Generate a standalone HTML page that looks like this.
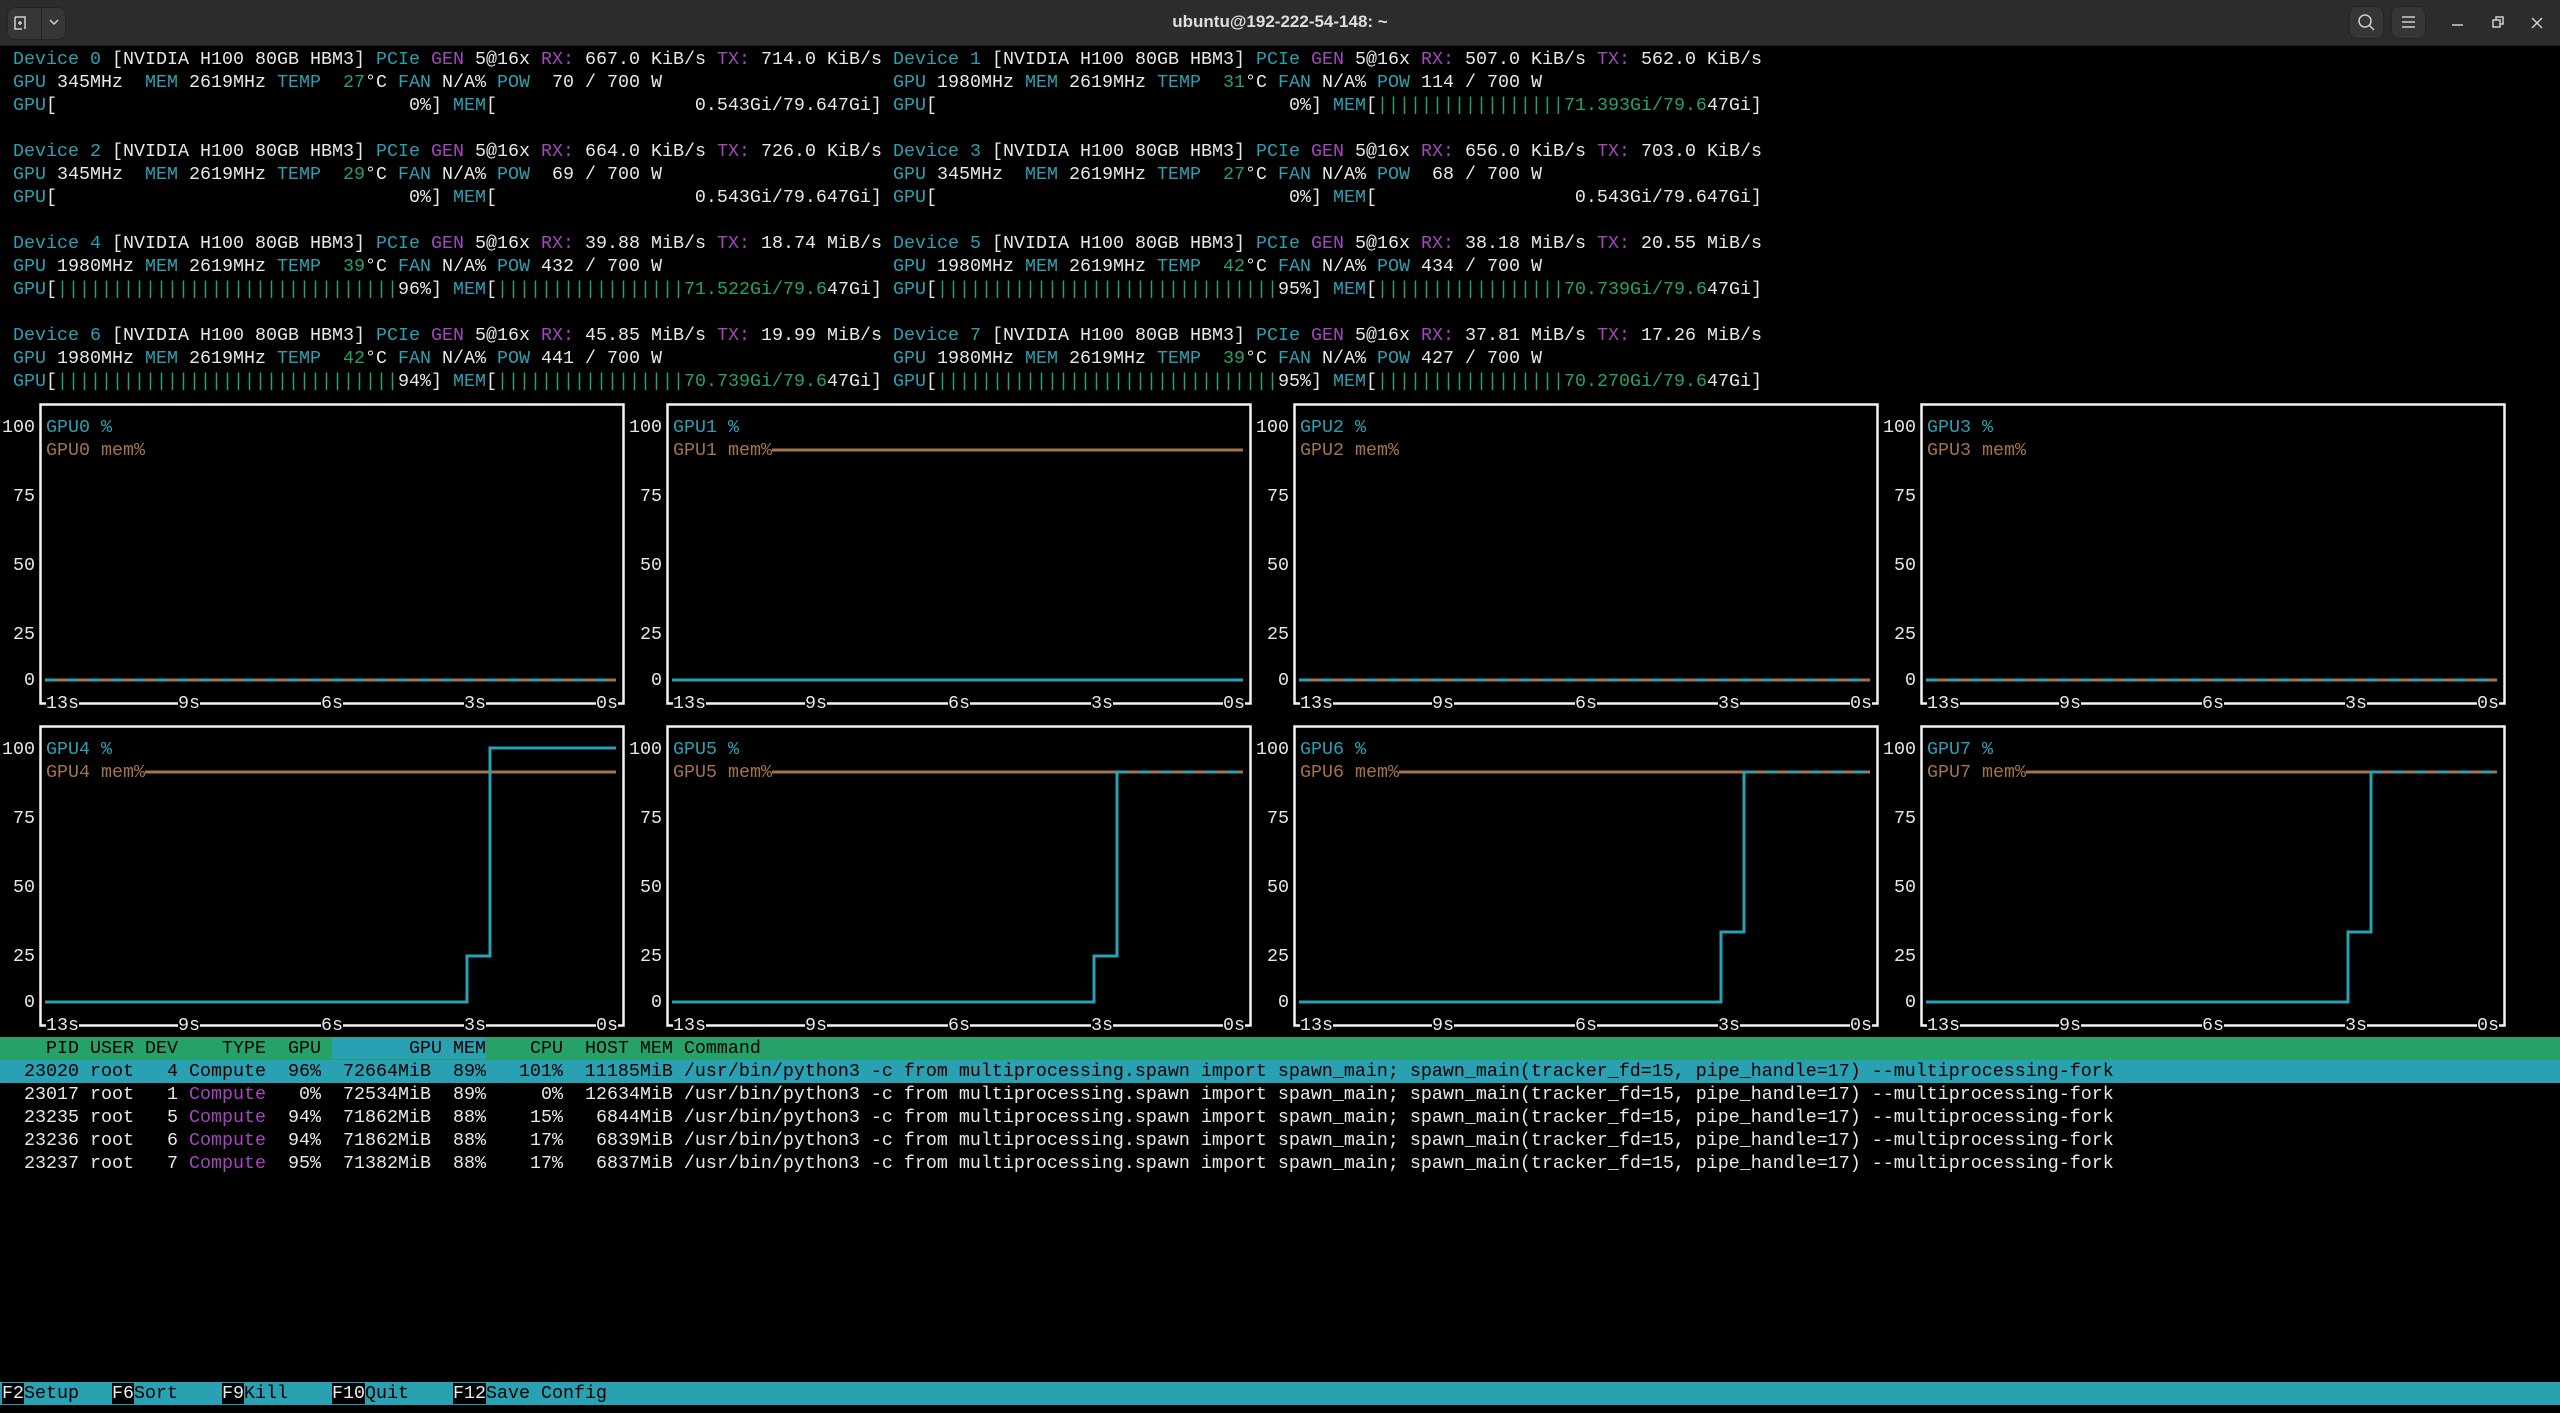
<!DOCTYPE html>
<html><head><meta charset="utf-8">
<style>
*{margin:0;padding:0;box-sizing:border-box}
html,body{width:2560px;height:1413px;background:#000;overflow:hidden}
body{position:relative;font-family:"Liberation Mono","DejaVu Sans Mono",monospace;font-size:18.33px;color:#e8e8e8}
.r{position:absolute;white-space:pre;line-height:23px;height:23px}
.c{color:#2aa1b3}.m{color:#a347ba}.g{color:#26a269}.o{color:#a2734c}
.k{background:#000}
.bg{display:inline-block;overflow:hidden;vertical-align:top;color:#26a269;height:23px}
.b31{width:341px}.b18{width:187px}
#tb{position:absolute;left:0;top:0;width:2560px;height:46px;background:#2c2c2c;border-bottom:1px solid #1e1e1e}
#tt{position:absolute;left:0;width:2560px;top:0;line-height:44px;text-align:center;font-family:"Liberation Sans",sans-serif;font-weight:bold;font-size:17px;color:#dedede}
.btn{position:absolute;background:#363636;border:1px solid #242424;border-radius:8px}
svg{position:absolute;left:0;top:0}
</style></head><body>
<div id="tb">
<div id="tt">ubuntu@192-222-54-148: ~</div>
<div class="btn" style="left:7px;top:7px;width:59px;height:33px"></div>
<div style="position:absolute;left:41px;top:7px;width:1px;height:33px;background:#242424"></div>
<div class="btn" style="left:2349px;top:6px;width:35px;height:33px"></div>
<div class="btn" style="left:2391px;top:6px;width:35px;height:33px"></div>
</div>
<svg width="2560" height="1413" viewBox="0 0 2560 1413">
<g fill="none" stroke="#cfcfcf" stroke-width="1.5">
<path d="M15,17 V29 H22 M15,17 H25 V29 M18,23 H22 M20,21 V25"/>
<path d="M50,20 L54,24 L58,20"/>
<circle cx="2365" cy="21" r="6"/><path d="M2369,25 L2374,30"/>
<path d="M2402,17 H2415 M2402,22 H2415 M2402,27 H2415"/>
<path d="M2452,25 H2463"/>
<path d="M2493,20 H2500 V27 H2493 Z M2496,20 V17 H2503 V24 H2500"/>
<path d="M2532,18 L2542,28 M2542,18 L2532,28"/>
</g>
<g fill="none" stroke="#f2f2f2" stroke-width="2.5">
<rect x="40.5" y="404.5" width="583" height="299"/>
<rect x="667.5" y="404.5" width="583" height="299"/>
<rect x="1294.5" y="404.5" width="583" height="299"/>
<rect x="1921.5" y="404.5" width="583" height="299"/>
<rect x="40.5" y="726.5" width="583" height="299"/>
<rect x="667.5" y="726.5" width="583" height="299"/>
<rect x="1294.5" y="726.5" width="583" height="299"/>
<rect x="1921.5" y="726.5" width="583" height="299"/>
</g>
<g fill="none" stroke-width="3">
<path stroke="#2aa1b3" d="M45,680 H616 M1299,680 H1870 M1926,680 H2497 M672,680 H1243"/>
<path stroke="#a2734c" stroke-dasharray="11 11" d="M56,680 H616 M1310,680 H1870 M1937,680 H2497"/>
<path stroke="#a2734c" d="M772,450 H1243"/>
<path stroke="#a2734c" d="M145,772 H616 M772,772 H1243 M1399,772 H1870 M2026,772 H2497"/>
<path stroke="#2aa1b3" d="M45,1002 H467 V956 H490 V748 H616 M672,1002 H1094 V956 H1117 V772 H1243 M1299,1002 H1721 V932 H1744 V772 H1870 M1926,1002 H2348 V932 H2371 V772 H2497"/>
<path stroke="#a2734c" stroke-dasharray="11 11" d="M1128,772 H1243 M1755,772 H1870 M2382,772 H2497"/>
</g>
</svg>

<div class="r" style="left:2px;top:48px"> <span class="c">Device 0</span> [NVIDIA H100 80GB HBM3] <span class="c">PCIe</span> <span class="m">GEN</span> 5@16x <span class="m">RX:</span> 667.0 KiB/s <span class="m">TX:</span> 714.0 KiB/s</div>
<div class="r" style="left:893px;top:48px"><span class="c">Device 1</span> [NVIDIA H100 80GB HBM3] <span class="c">PCIe</span> <span class="m">GEN</span> 5@16x <span class="m">RX:</span> 507.0 KiB/s <span class="m">TX:</span> 562.0 KiB/s</div>
<div class="r" style="left:2px;top:71px"> <span class="c">GPU</span> 345MHz  <span class="c">MEM</span> 2619MHz <span class="c">TEMP</span>  <span class="g">27</span>°C <span class="c">FAN</span> N/A% <span class="c">POW</span>  70 / 700 W</div>
<div class="r" style="left:893px;top:71px"><span class="c">GPU</span> 1980MHz <span class="c">MEM</span> 2619MHz <span class="c">TEMP</span>  <span class="g">31</span>°C <span class="c">FAN</span> N/A% <span class="c">POW</span> 114 / 700 W</div>
<div class="r" style="left:2px;top:94px"> <span class="c">GPU</span>[                                0%] <span class="c">MEM</span>[                  0.543Gi/79.647Gi]</div>
<div class="r" style="left:893px;top:94px"><span class="c">GPU</span>[                                0%] <span class="c">MEM</span>[<span class="bg b18">||||||||||||||||||||||||</span><span class="g">71.393Gi/79.6</span>47Gi]</div>

<div class="r" style="left:2px;top:140px"> <span class="c">Device 2</span> [NVIDIA H100 80GB HBM3] <span class="c">PCIe</span> <span class="m">GEN</span> 5@16x <span class="m">RX:</span> 664.0 KiB/s <span class="m">TX:</span> 726.0 KiB/s</div>
<div class="r" style="left:893px;top:140px"><span class="c">Device 3</span> [NVIDIA H100 80GB HBM3] <span class="c">PCIe</span> <span class="m">GEN</span> 5@16x <span class="m">RX:</span> 656.0 KiB/s <span class="m">TX:</span> 703.0 KiB/s</div>
<div class="r" style="left:2px;top:163px"> <span class="c">GPU</span> 345MHz  <span class="c">MEM</span> 2619MHz <span class="c">TEMP</span>  <span class="g">29</span>°C <span class="c">FAN</span> N/A% <span class="c">POW</span>  69 / 700 W</div>
<div class="r" style="left:893px;top:163px"><span class="c">GPU</span> 345MHz  <span class="c">MEM</span> 2619MHz <span class="c">TEMP</span>  <span class="g">27</span>°C <span class="c">FAN</span> N/A% <span class="c">POW</span>  68 / 700 W</div>
<div class="r" style="left:2px;top:186px"> <span class="c">GPU</span>[                                0%] <span class="c">MEM</span>[                  0.543Gi/79.647Gi]</div>
<div class="r" style="left:893px;top:186px"><span class="c">GPU</span>[                                0%] <span class="c">MEM</span>[                  0.543Gi/79.647Gi]</div>

<div class="r" style="left:2px;top:232px"> <span class="c">Device 4</span> [NVIDIA H100 80GB HBM3] <span class="c">PCIe</span> <span class="m">GEN</span> 5@16x <span class="m">RX:</span> 39.88 MiB/s <span class="m">TX:</span> 18.74 MiB/s</div>
<div class="r" style="left:893px;top:232px"><span class="c">Device 5</span> [NVIDIA H100 80GB HBM3] <span class="c">PCIe</span> <span class="m">GEN</span> 5@16x <span class="m">RX:</span> 38.18 MiB/s <span class="m">TX:</span> 20.55 MiB/s</div>
<div class="r" style="left:2px;top:255px"> <span class="c">GPU</span> 1980MHz <span class="c">MEM</span> 2619MHz <span class="c">TEMP</span>  <span class="g">39</span>°C <span class="c">FAN</span> N/A% <span class="c">POW</span> 432 / 700 W</div>
<div class="r" style="left:893px;top:255px"><span class="c">GPU</span> 1980MHz <span class="c">MEM</span> 2619MHz <span class="c">TEMP</span>  <span class="g">42</span>°C <span class="c">FAN</span> N/A% <span class="c">POW</span> 434 / 700 W</div>
<div class="r" style="left:2px;top:278px"> <span class="c">GPU</span>[<span class="bg b31">||||||||||||||||||||||||||||||||||||||</span>96%] <span class="c">MEM</span>[<span class="bg b18">||||||||||||||||||||||||</span><span class="g">71.522Gi/79.6</span>47Gi]</div>
<div class="r" style="left:893px;top:278px"><span class="c">GPU</span>[<span class="bg b31">||||||||||||||||||||||||||||||||||||||</span>95%] <span class="c">MEM</span>[<span class="bg b18">||||||||||||||||||||||||</span><span class="g">70.739Gi/79.6</span>47Gi]</div>

<div class="r" style="left:2px;top:324px"> <span class="c">Device 6</span> [NVIDIA H100 80GB HBM3] <span class="c">PCIe</span> <span class="m">GEN</span> 5@16x <span class="m">RX:</span> 45.85 MiB/s <span class="m">TX:</span> 19.99 MiB/s</div>
<div class="r" style="left:893px;top:324px"><span class="c">Device 7</span> [NVIDIA H100 80GB HBM3] <span class="c">PCIe</span> <span class="m">GEN</span> 5@16x <span class="m">RX:</span> 37.81 MiB/s <span class="m">TX:</span> 17.26 MiB/s</div>
<div class="r" style="left:2px;top:347px"> <span class="c">GPU</span> 1980MHz <span class="c">MEM</span> 2619MHz <span class="c">TEMP</span>  <span class="g">42</span>°C <span class="c">FAN</span> N/A% <span class="c">POW</span> 441 / 700 W</div>
<div class="r" style="left:893px;top:347px"><span class="c">GPU</span> 1980MHz <span class="c">MEM</span> 2619MHz <span class="c">TEMP</span>  <span class="g">39</span>°C <span class="c">FAN</span> N/A% <span class="c">POW</span> 427 / 700 W</div>
<div class="r" style="left:2px;top:370px"> <span class="c">GPU</span>[<span class="bg b31">||||||||||||||||||||||||||||||||||||||</span>94%] <span class="c">MEM</span>[<span class="bg b18">||||||||||||||||||||||||</span><span class="g">70.739Gi/79.6</span>47Gi]</div>
<div class="r" style="left:893px;top:370px"><span class="c">GPU</span>[<span class="bg b31">||||||||||||||||||||||||||||||||||||||</span>95%] <span class="c">MEM</span>[<span class="bg b18">||||||||||||||||||||||||</span><span class="g">70.270Gi/79.6</span>47Gi]</div>

<div class="r" style="left:2px;top:416px">100 <span class="c">GPU0 %</span></div>
<div class="r" style="left:2px;top:439px">    <span class="o">GPU0 mem%</span></div>
<div class="r" style="left:629px;top:416px">100 <span class="c">GPU1 %</span></div>
<div class="r" style="left:629px;top:439px">    <span class="o k">GPU1 mem%</span></div>
<div class="r" style="left:1256px;top:416px">100 <span class="c">GPU2 %</span></div>
<div class="r" style="left:1256px;top:439px">    <span class="o">GPU2 mem%</span></div>
<div class="r" style="left:1883px;top:416px">100 <span class="c">GPU3 %</span></div>
<div class="r" style="left:1883px;top:439px">    <span class="o">GPU3 mem%</span></div>
<div class="r" style="left:2px;top:485px"> 75</div><div class="r" style="left:629px;top:485px"> 75</div><div class="r" style="left:1256px;top:485px"> 75</div><div class="r" style="left:1883px;top:485px"> 75</div>
<div class="r" style="left:2px;top:554px"> 50</div><div class="r" style="left:629px;top:554px"> 50</div><div class="r" style="left:1256px;top:554px"> 50</div><div class="r" style="left:1883px;top:554px"> 50</div>
<div class="r" style="left:2px;top:623px"> 25</div><div class="r" style="left:629px;top:623px"> 25</div><div class="r" style="left:1256px;top:623px"> 25</div><div class="r" style="left:1883px;top:623px"> 25</div>
<div class="r" style="left:2px;top:669px">  0</div><div class="r" style="left:629px;top:669px">  0</div><div class="r" style="left:1256px;top:669px">  0</div><div class="r" style="left:1883px;top:669px">  0</div>
<div class="r" style="left:2px;top:692px">    <span class="k">13s</span>         <span class="k">9s</span>           <span class="k">6s</span>           <span class="k">3s</span>          <span class="k">0s</span></div>
<div class="r" style="left:629px;top:692px">    <span class="k">13s</span>         <span class="k">9s</span>           <span class="k">6s</span>           <span class="k">3s</span>          <span class="k">0s</span></div>
<div class="r" style="left:1256px;top:692px">    <span class="k">13s</span>         <span class="k">9s</span>           <span class="k">6s</span>           <span class="k">3s</span>          <span class="k">0s</span></div>
<div class="r" style="left:1883px;top:692px">    <span class="k">13s</span>         <span class="k">9s</span>           <span class="k">6s</span>           <span class="k">3s</span>          <span class="k">0s</span></div>

<div class="r" style="left:2px;top:738px">100 <span class="c">GPU4 %</span></div>
<div class="r" style="left:2px;top:761px">    <span class="o k">GPU4 mem%</span></div>
<div class="r" style="left:629px;top:738px">100 <span class="c">GPU5 %</span></div>
<div class="r" style="left:629px;top:761px">    <span class="o k">GPU5 mem%</span></div>
<div class="r" style="left:1256px;top:738px">100 <span class="c">GPU6 %</span></div>
<div class="r" style="left:1256px;top:761px">    <span class="o k">GPU6 mem%</span></div>
<div class="r" style="left:1883px;top:738px">100 <span class="c">GPU7 %</span></div>
<div class="r" style="left:1883px;top:761px">    <span class="o k">GPU7 mem%</span></div>
<div class="r" style="left:2px;top:807px"> 75</div><div class="r" style="left:629px;top:807px"> 75</div><div class="r" style="left:1256px;top:807px"> 75</div><div class="r" style="left:1883px;top:807px"> 75</div>
<div class="r" style="left:2px;top:876px"> 50</div><div class="r" style="left:629px;top:876px"> 50</div><div class="r" style="left:1256px;top:876px"> 50</div><div class="r" style="left:1883px;top:876px"> 50</div>
<div class="r" style="left:2px;top:945px"> 25</div><div class="r" style="left:629px;top:945px"> 25</div><div class="r" style="left:1256px;top:945px"> 25</div><div class="r" style="left:1883px;top:945px"> 25</div>
<div class="r" style="left:2px;top:991px">  0</div><div class="r" style="left:629px;top:991px">  0</div><div class="r" style="left:1256px;top:991px">  0</div><div class="r" style="left:1883px;top:991px">  0</div>
<div class="r" style="left:2px;top:1014px">    <span class="k">13s</span>         <span class="k">9s</span>           <span class="k">6s</span>           <span class="k">3s</span>          <span class="k">0s</span></div>
<div class="r" style="left:629px;top:1014px">    <span class="k">13s</span>         <span class="k">9s</span>           <span class="k">6s</span>           <span class="k">3s</span>          <span class="k">0s</span></div>
<div class="r" style="left:1256px;top:1014px">    <span class="k">13s</span>         <span class="k">9s</span>           <span class="k">6s</span>           <span class="k">3s</span>          <span class="k">0s</span></div>
<div class="r" style="left:1883px;top:1014px">    <span class="k">13s</span>         <span class="k">9s</span>           <span class="k">6s</span>           <span class="k">3s</span>          <span class="k">0s</span></div>

<div class="r" style="left:0;top:1037px;width:2560px;background:#26a269;color:#000;padding-left:2px">    PID USER DEV    TYPE  GPU <span style="background:#2aa1b3">       GPU MEM</span>    CPU  HOST MEM Command</div>
<div class="r" style="left:0;top:1060px;width:2560px;background:#2aa1b3;color:#000;padding-left:2px">  23020 root   4 Compute  96%  72664MiB  89%   101%  11185MiB /usr/bin/python3 -c from multiprocessing.spawn import spawn_main; spawn_main(tracker_fd=15, pipe_handle=17) --multiprocessing-fork</div>
<div class="r" style="left:2px;top:1083px">  23017 root   1 <span class="m">Compute</span>   0%  72534MiB  89%     0%  12634MiB /usr/bin/python3 -c from multiprocessing.spawn import spawn_main; spawn_main(tracker_fd=15, pipe_handle=17) --multiprocessing-fork</div>
<div class="r" style="left:2px;top:1106px">  23235 root   5 <span class="m">Compute</span>  94%  71862MiB  88%    15%   6844MiB /usr/bin/python3 -c from multiprocessing.spawn import spawn_main; spawn_main(tracker_fd=15, pipe_handle=17) --multiprocessing-fork</div>
<div class="r" style="left:2px;top:1129px">  23236 root   6 <span class="m">Compute</span>  94%  71862MiB  88%    17%   6839MiB /usr/bin/python3 -c from multiprocessing.spawn import spawn_main; spawn_main(tracker_fd=15, pipe_handle=17) --multiprocessing-fork</div>
<div class="r" style="left:2px;top:1152px">  23237 root   7 <span class="m">Compute</span>  95%  71382MiB  88%    17%   6837MiB /usr/bin/python3 -c from multiprocessing.spawn import spawn_main; spawn_main(tracker_fd=15, pipe_handle=17) --multiprocessing-fork</div>

<div class="r" style="left:0;top:1382px;width:2560px;background:#2aa1b3;color:#000;padding-left:2px"><span style="background:#000;color:#eee">F2</span>Setup   <span style="background:#000;color:#eee">F6</span>Sort    <span style="background:#000;color:#eee">F9</span>Kill    <span style="background:#000;color:#eee">F10</span>Quit    <span style="background:#000;color:#eee">F12</span>Save Config</div>
</body></html>
